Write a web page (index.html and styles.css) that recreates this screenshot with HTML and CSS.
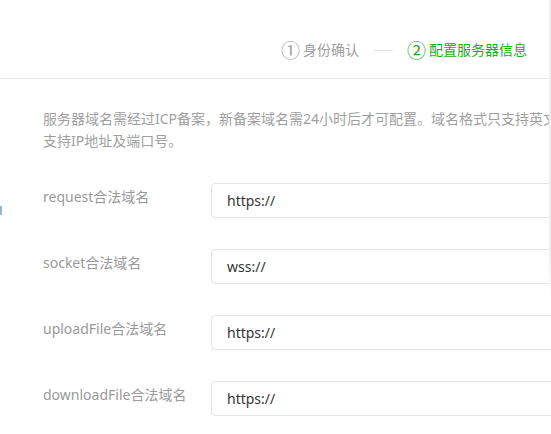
FILE: index.html
```html
<!DOCTYPE html>
<html>
<head>
<meta charset="utf-8">
<link rel="stylesheet" href="styles.css">
</head>
<body>
<div class="page">
  <div class="header">
    <div class="steps">
      <div class="step"><span class="num">①</span><span class="step-text">身份确认</span></div>
      <div class="step-line"></div>
      <div class="step active"><span class="num">②</span><span class="step-text">配置服务器信息</span></div>
    </div>
  </div>
  <div class="content">
    <p class="desc">服务器域名需经过ICP备案，新备案域名需24小时后才可配置。域名格式只支持英文大小写字母、数字及“-”，不支持IP地址及端口号。<br>支持IP地址及端口号。</p>
    <div class="form">
      <div class="row"><label class="label">request合法域名</label><div class="input">https://</div></div>
      <div class="row"><label class="label">socket合法域名</label><div class="input">wss://</div></div>
      <div class="row"><label class="label">uploadFile合法域名</label><div class="input">https://</div></div>
      <div class="row"><label class="label">downloadFile合法域名</label><div class="input">https://</div></div>
    </div>
  </div>
  <div class="edge-shadow"></div>
  <div class="left-mark"></div>
</div>
</body>
</html>
```
FILE: styles.css
```css
html, body {
  margin: 0;
  padding: 0;
  background: #fff;
}
.page {
  position: relative;
  width: 551px;
  height: 434px;
  overflow: hidden;
  font-family: "Noto Sans", "Noto Sans CJK SC", sans-serif;
  font-size: 14px;
  color: #999;
}
.header {
  height: 79px;
  box-sizing: border-box;
  border-bottom: 1px solid #e7e7e7;
  display: flex;
  justify-content: flex-end;
  align-items: flex-start;
  padding: 39px 24px 0 0;
}
.steps {
  display: flex;
  align-items: center;
  height: 22px;
}
.step {
  display: flex;
  align-items: center;
  color: #9e9e9e;
  white-space: nowrap;
}
.step.active {
  color: #1aad19;
}
.num {
  font-size: 19px;
  line-height: 22px;
  margin-right: 3px;
  font-family: "Noto Sans CJK SC", sans-serif;
}
.step-text {
  line-height: 22px;
}
.step-line {
  width: 20px;
  height: 1px;
  background: #e2e2e2;
  margin: 0 14px 0 14px;
}
.content {
  padding: 29px 0 0 43px;
}
.desc {
  margin: 0;
  line-height: 22px;
  white-space: nowrap;
  color: #9f9f9f;
}
.form {
  margin-top: 31px;
  display: flex;
  flex-direction: column;
  gap: 31px;
}
.row {
  display: flex;
  align-items: flex-start;
}
.label {
  width: 168px;
  flex: none;
  padding-top: 4px;
  line-height: 20px;
  color: #9a9a9a;
  white-space: nowrap;
}
.input {
  flex: none;
  width: 420px;
  height: 35px;
  box-sizing: border-box;
  border: 1px solid #e4e4e4;
  border-radius: 4px;
  padding: 0 15px;
  line-height: 33px;
  color: #353535;
}
.edge-shadow {
  position: absolute;
  right: 0;
  top: 0;
  width: 2px;
  height: 300px;
  background: linear-gradient(to bottom, #eeeeee 85%, #ffffff);
}
.left-mark {
  position: absolute;
  left: 0;
  top: 206px;
  width: 2px;
  height: 9px;
  background: #9ab6d2;
}
```
